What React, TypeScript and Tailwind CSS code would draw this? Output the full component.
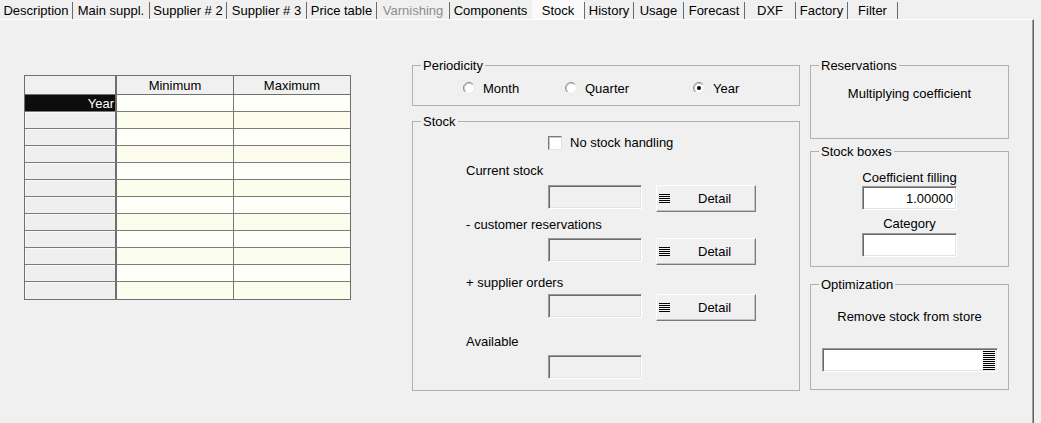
import React from "react";

const tabs: { label: string; w: number; selected?: boolean; disabled?: boolean; noSep?: boolean }[] = [
  { label: "Description", w: 72 },
  { label: "Main suppl.", w: 76 },
  { label: "Supplier # 2", w: 76 },
  { label: "Supplier # 3", w: 79 },
  { label: "Price table", w: 69 },
  { label: "Varnishing", w: 72, disabled: true },
  { label: "Components", w: 81, noSep: true },
  { label: "Stock", w: 52, selected: true },
  { label: "History", w: 48 },
  { label: "Usage", w: 49 },
  { label: "Forecast", w: 60 },
  { label: "DXF", w: 50 },
  { label: "Factory", w: 51 },
  { label: "Filter", w: 49 },
];

function ListIcon({ className = "" }: { className?: string }) {
  return (
    <svg width="11" height="9" viewBox="0 0 11 9" className={className} shapeRendering="crispEdges">
      {[0, 2, 4, 6, 8].map((y) => (
        <rect key={y} x="0" y={y} width="11" height="1" fill="#000" />
      ))}
    </svg>
  );
}

function TallListIcon() {
  return (
    <svg width="14" height="20" viewBox="0 0 14 20" shapeRendering="crispEdges">
      <rect x="0" y="0" width="14" height="20" fill="#f4f4f4" />
      {[0, 2, 4, 6, 8, 10, 12, 14, 16, 18].map((y) => (
        <rect key={y} x="1" y={y + 1} width="12" height="1" fill="#000" />
      ))}
    </svg>
  );
}

function Radio({ checked }: { checked?: boolean }) {
  return (
    <svg width="12" height="12" viewBox="0 0 12 12" className="shrink-0">
      <circle cx="6" cy="6" r="5.5" fill="#fff" stroke="#e6e6e6" />
      <path d="M2.11 9.89 A5.5 5.5 0 0 1 9.89 2.11" fill="none" stroke="#8a8a8a" strokeWidth="1" />
      <path d="M2.82 9.18 A4.5 4.5 0 0 1 9.18 2.82" fill="none" stroke="#c8c8c8" strokeWidth="1" />
      {checked && <circle cx="6" cy="6" r="2" fill="#000" />}
    </svg>
  );
}

function Sunken({ className = "", white, children }: { className?: string; white?: boolean; children?: React.ReactNode }) {
  return (
    <div
      className={`${white ? "bg-white" : "bg-[#f0f0f0]"} border-t border-l border-t-[#9a9a9a] border-l-[#9a9a9a] border-r border-b border-r-white border-b-white shadow-[inset_1px_1px_0_#6a6a6a,inset_-1px_-1px_0_#e3e3e3] ${className}`}
    >
      {children}
    </div>
  );
}

function DetailButton() {
  return (
    <div className="w-[100px] h-[27px] bg-[#f0f0f0] border-t border-l border-t-white border-l-white border-r border-b border-r-[#7a7a7a] border-b-[#7a7a7a] shadow-[inset_-1px_-1px_0_#c4c4c4] flex items-center pl-[2px]">
      <ListIcon />
      <span className="ml-[28px]">Detail</span>
    </div>
  );
}

function Group({ title, className = "", children }: { title: string; className?: string; children?: React.ReactNode }) {
  return (
    <fieldset className={`border border-[#b0b0b0] ${className}`}>
      <legend className="ml-[8px] px-[2px] leading-[15px]">{title}</legend>
      {children}
    </fieldset>
  );
}

export default function App() {
  const rows = Array.from({ length: 12 });
  return (
    <div className="w-[1041px] h-[423px] bg-[#f0f0f0] text-[13px] leading-[15px] text-black font-['Liberation_Sans',Arial,sans-serif] overflow-hidden">
      {/* Tab strip */}
      <div className="flex h-[19px] items-stretch">
        {tabs.map((t) => (
          <div key={t.label} className="flex items-stretch">
            <div
              style={{ width: t.w }}
              className={`flex items-center justify-center pt-[1px] whitespace-nowrap ${t.selected ? "bg-[#fafafa]" : ""} ${t.disabled ? "text-[#8d8d8d]" : ""}`}
            >
              {t.label}
            </div>
            {t.noSep ? (
              <div className="w-[1px]" />
            ) : (
              <div className="w-[1px] mt-[2px] bg-[#6a6a6a]" />
            )}
          </div>
        ))}
      </div>

      {/* Panel */}
      <div className="w-[1034px] h-[404px] border-t border-t-white border-r border-r-[#5f5f5f] shadow-[inset_-1px_0_0_#a0a0a0] flex items-start">
        {/* Table */}
        <div className="ml-[24px] mt-[55px] w-[327px] border border-[#6f6f6f]">
          <div className="flex h-[19px] border-b border-[#6f6f6f] bg-[#f0f0f0]">
            <div className="w-[92px] border-r-2 border-[#6f6f6f]" />
            <div className="w-[117px] border-r border-[#6f6f6f] flex items-center justify-center">Minimum</div>
            <div className="flex-1 flex items-center justify-center">Maximum</div>
          </div>
          {rows.map((_, i) => (
            <div key={i} className={`flex h-[17px] ${i < rows.length - 1 ? "border-b border-[#7a7a7a]" : ""}`}>
              <div
                className={`w-[92px] border-r-2 border-[#6f6f6f] flex items-center justify-end pr-[1px] ${
                  i === 0 ? "bg-[#0d0d0d] text-white" : "bg-[#efefef] shadow-[inset_1px_1px_0_#fafafa]"
                }`}
              >
                {i === 0 ? "Year" : ""}
              </div>
              <div className={`w-[117px] border-r border-[#7a7a7a] ${i % 2 === 0 ? "bg-[#fffffa]" : "bg-[#fdfdee]"}`} />
              <div className={`flex-1 ${i % 2 === 0 ? "bg-[#fffffa]" : "bg-[#fdfdee]"}`} />
            </div>
          ))}
        </div>

        {/* Middle column */}
        <div className="ml-[61px] mt-[38px] w-[388px] flex flex-col">
          <Group title="Periodicity" className="pb-[9px]">
            <div className="mt-[7px] h-[16px] flex items-center pl-[50px]">
              <div className="w-[102px] flex items-center gap-[8px]">
                <Radio />
                <span>Month</span>
              </div>
              <div className="w-[128px] flex items-center gap-[8px]">
                <Radio />
                <span>Quarter</span>
              </div>
              <div className="flex items-center gap-[8px]">
                <Radio checked />
                <span>Year</span>
              </div>
            </div>
          </Group>

          <Group title="Stock" className="mt-[8px] pb-[11px]">
            <div className="mt-[6px] h-[15px] flex items-center pl-[135px]">
              <div className="w-[14px] h-[14px] bg-white border-t border-l border-t-[#7a7a7a] border-l-[#7a7a7a] border-r border-b border-r-[#e3e3e3] border-b-[#e3e3e3] shadow-[inset_1px_1px_0_#c8c8c8]" />
              <span className="ml-[8px]">No stock handling</span>
            </div>

            <div className="mt-[13px] h-[15px] pl-[53px]">Current stock</div>
            <div className="mt-[7px] flex items-start pl-[135px] gap-[14px]">
              <Sunken className="w-[94px] h-[24px]" />
              <DetailButton />
            </div>

            <div className="mt-[5px] h-[15px] pl-[53px]">- customer reservations</div>
            <div className="mt-[6px] flex items-start pl-[135px] gap-[14px]">
              <Sunken className="w-[94px] h-[24px]" />
              <DetailButton />
            </div>

            <div className="mt-[10px] h-[15px] pl-[53px]">+ supplier orders</div>
            <div className="mt-[4px] flex items-start pl-[135px] gap-[14px]">
              <Sunken className="w-[94px] h-[24px]" />
              <DetailButton />
            </div>

            <div className="mt-[13px] h-[15px] pl-[53px]">Available</div>
            <div className="mt-[6px] flex pl-[135px]">
              <Sunken className="w-[94px] h-[24px]" />
            </div>
          </Group>
        </div>

        {/* Right column */}
        <div className="ml-[10px] mt-[38px] w-[199px] flex flex-col">
          <Group title="Reservations" className="h-[81px]">
            <div className="mt-[13px] text-center">Multiplying coefficient</div>
          </Group>

          <Group title="Stock boxes" className="mt-[5px] pb-[9px]">
            <div className="mt-[11px] text-center">Coefficient filling</div>
            <div className="flex justify-center mt-[1px]">
              <Sunken white className="w-[95px] h-[24px] flex items-center justify-end pr-[3px]">
                1.00000
              </Sunken>
            </div>
            <div className="mt-[6px] text-center">Category</div>
            <div className="flex justify-center mt-[2px]">
              <Sunken white className="w-[95px] h-[24px]" />
            </div>
          </Group>

          <Group title="Optimization" className="mt-[10px] pb-[17px]">
            <div className="mt-[17px] text-center">Remove stock from store</div>
            <div className="flex justify-center mt-[24px]">
              <Sunken white className="w-[176px] h-[24px] flex items-center justify-end pr-[1px]">
                <TallListIcon />
              </Sunken>
            </div>
          </Group>
        </div>
      </div>
    </div>
  );
}
